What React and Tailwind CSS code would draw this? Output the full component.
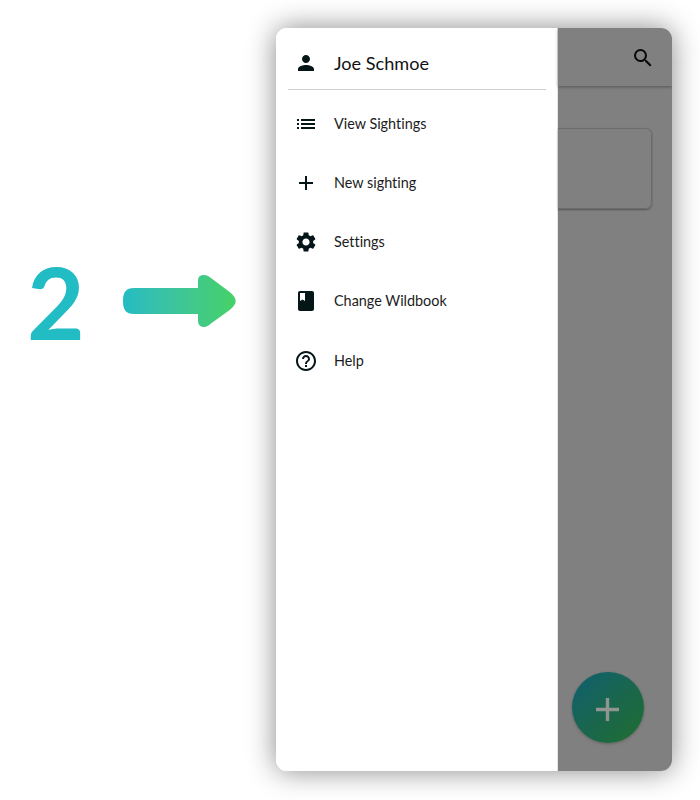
import { MdPerson, MdList, MdAdd, MdSettings, MdClass, MdHelpOutline, MdSearch } from 'react-icons/md';

const items = [
  { icon: MdList, label: 'View Sightings' },
  { icon: MdAdd, label: 'New sighting' },
  { icon: MdSettings, label: 'Settings' },
  { icon: MdClass, label: 'Change Wildbook' },
  { icon: MdHelpOutline, label: 'Help' },
];

function Arrow() {
  return (
    <svg width="114" height="54" viewBox="0 0 114 54" className="block">
      <defs>
        <linearGradient id="arrow" x1="0" y1="0" x2="1" y2="0">
          <stop offset="0" stopColor="#22bcc4" />
          <stop offset="0.25" stopColor="#36c0ae" />
          <stop offset="0.65" stopColor="#41c98a" />
          <stop offset="1" stopColor="#46d168" />
        </linearGradient>
      </defs>
      <path
        d="M11 14H75V7C75 2.500 77.500 1 81 1C83.500 1 85.500 2 88 4L106 17.500C110.500 21 112.700 24 112.700 27C112.700 30 110.500 33 106 36.500L88 49.500C85.500 51.700 83.500 53 81 53C77.500 53 75 51 75 46.500V40H11C3 40 0 36 0 27C0 18 3 14 11 14Z"
        fill="url(#arrow)"
      />
    </svg>
  );
}

function Drawer() {
  return (
    <nav className="w-[282px] shrink-0 border-r border-[#e4e4e4] bg-white text-[#051619]">
      <div className="ml-3 mr-[11px] flex h-[62px] items-center border-b border-[#cfcfcf] pl-[6px] pt-[9px]">
        <MdPerson size={24} />
        <span className="ml-4 pt-[2px] text-[18.100px] text-[#111]">Joe Schmoe</span>
      </div>
      <ul className="mt-[3.900px]">
        {items.map(({ icon: Icon, label }) => (
          <li key={label} className="flex h-[59.250px] items-center pl-[18px]">
            <Icon size={24} />
            <span className="ml-4 text-[14.400px] text-[#1c1c1c] [font-variant-ligatures:none]">{label}</span>
          </li>
        ))}
      </ul>
    </nav>
  );
}

function Backdrop() {
  return (
    <div className="flex flex-1 flex-col bg-[#808080]">
      <div className="flex h-[58px] shrink-0 items-center justify-end pr-[17px] pt-[1px] shadow-[0_1px_3px_rgba(0,0,0,0.35)]">
        <MdSearch size={24} color="#080808" />
      </div>
      <div className="mr-5 mt-[42px] h-[81px] rounded-r-[6px] border border-l-0 border-[#6c6c6c] shadow-[0_1px_2px_rgba(0,0,0,0.35)]" />
      <div className="mb-[28px] mr-7 mt-auto flex h-[71px] w-[72px] items-center justify-center self-end rounded-full bg-linear-135 from-[#11606a] from-10% via-[#1a664e] via-50% to-[#1e6c34] to-90% pr-[1px] pt-[3px] shadow-[0_1px_3px_rgba(0,0,0,0.25)]">
        <svg width="23" height="23" viewBox="0 0 23 23" fill="none" stroke="#909590" strokeWidth="3.400">
          <path d="M11.500 0V23M0 11.500H23" />
        </svg>
      </div>
    </div>
  );
}

export default function App() {
  return (
    <div className="flex h-[800px] w-[700px] overflow-hidden bg-white font-['Lato',sans-serif]">
      <div className="flex w-[276px] shrink-0 items-start pl-[27px] pt-[242px]">
        <span className="w-[96px] text-[99.500px] leading-[119px] font-bold text-[#22bcc4]">2</span>
        <div className="pt-[32px]">
          <Arrow />
        </div>
      </div>
      <div className="mt-7 h-[743px] w-[396px] rounded-[11px] shadow-[0_0_29px_rgba(0,0,0,0.47)]">
        <div className="flex h-full overflow-hidden rounded-[11px]">
          <Drawer />
          <Backdrop />
        </div>
      </div>
    </div>
  );
}
